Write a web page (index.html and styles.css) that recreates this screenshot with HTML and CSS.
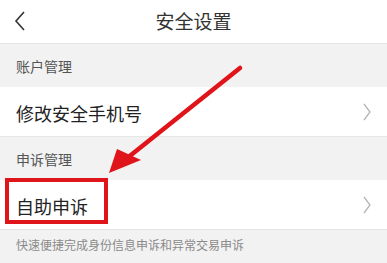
FILE: index.html
```html
<!DOCTYPE html>
<html lang="zh-CN">
<head>
    <meta charset="UTF-8">
    <meta name="viewport" content="width=device-width, initial-scale=1.0">
    <title>安全设置</title>
    <link rel="stylesheet" href="styles.css">
</head>
<body>

<div class="page">
    <div class="header">
        <svg class="back" width="14" height="22" viewBox="0 0 14 22">
            <polyline points="11,2 3,11 11,20" fill="none" stroke="#333" stroke-width="1.6"/>
        </svg>
        <h1>安全设置</h1>
    </div>

    <div class="section-title">账户管理</div>
    <div class="row">
        <span class="row-text">修改安全手机号</span>
        <svg class="chevron" width="10" height="20" viewBox="0 0 10 20">
            <polyline points="2,2 8,10 2,18" fill="none" stroke="#b5b5b5" stroke-width="1.3"/>
        </svg>
    </div>

    <div class="section-title">申诉管理</div>
    <div class="row">
        <span class="row-text">自助申诉</span>
        <svg class="chevron" width="10" height="20" viewBox="0 0 10 20">
            <polyline points="2,2 8,10 2,18" fill="none" stroke="#b5b5b5" stroke-width="1.3"/>
        </svg>
        <div class="mark-box"></div>
    </div>
    <div class="note">快速便捷完成身份信息申诉和异常交易申诉</div>

    <!-- 标注箭头 -->
    <svg class="arrow" width="387" height="263" viewBox="0 0 387 263">
        <line x1="240" y1="68" x2="126" y2="159" stroke="#e0141b" stroke-width="4.5" stroke-linecap="round"/>
        <polygon points="109,173 117,149 141,160" fill="#e0141b"/>
    </svg>
</div>

</body>
</html>
```

FILE: styles.css
```css
body {
    margin: 0;
    padding: 0;
    font-family: "Noto Sans CJK SC", "Noto Sans", sans-serif;
    background-color: #f2f2f2;
}
.page {
    position: relative;
    width: 387px;
    height: 263px;
    overflow: hidden;
}
.header {
    height: 43px;
    background-color: #fff;
    border-bottom: 1px solid #e6e6e6;
    display: flex;
    align-items: center;
    justify-content: center;
    position: relative;
}
.header h1 {
    margin: 0 0 2px 0;
    font-size: 19px;
    font-weight: normal;
    color: #333;
}
.back {
    position: absolute;
    left: 13px;
    top: 10px;
}
.section-title {
    height: 43px;
    display: flex;
    align-items: center;
    padding-left: 16px;
    font-size: 14px;
    color: #555;
}
.row {
    height: 49px;
    background-color: #fff;
    border-bottom: 1px solid #e6e6e6;
    display: flex;
    align-items: center;
    justify-content: space-between;
    padding: 0 15px 0 16px;
    position: relative;
}
.row-text {
    font-size: 18px;
    color: #222;
    margin-top: 2px;
}
.mark-box {
    position: absolute;
    left: 5px;
    top: -2px;
    width: 95px;
    height: 38px;
    border: 4px solid #e0141b;
}
.note {
    padding: 6px 16px;
    font-size: 12px;
    color: #8a8a8a;
}
.arrow {
    position: absolute;
    left: 0;
    top: 0;
}
```
